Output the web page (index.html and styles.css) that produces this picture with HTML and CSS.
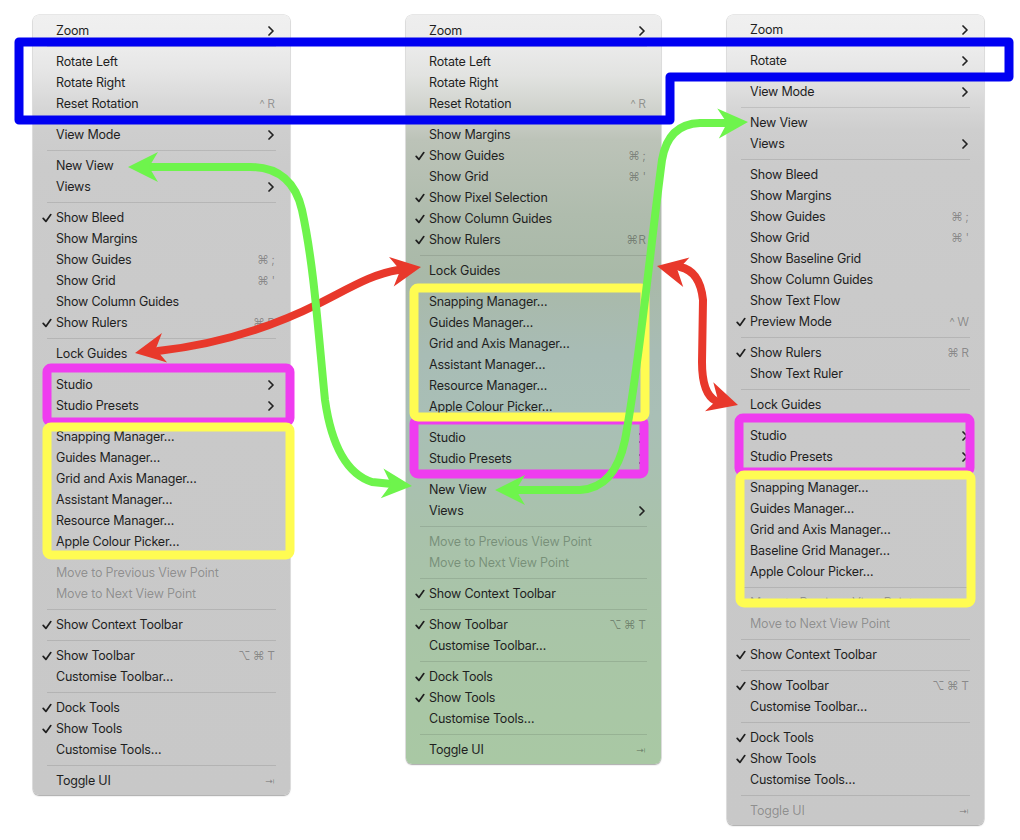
FILE: index.html
```html
<!DOCTYPE html>
<html>
<head>
<meta charset="utf-8">
<link rel="stylesheet" href="styles.css">
</head>
<body>
<div class="stage">
  <div class="menus">
    <div class="menu m1">
      <div class="item"><span class="chk"></span><span class="lbl">Zoom</span><svg class="cv" viewBox="0 0 6 10"><path d="M1 1L5 5L1 9"/></svg></div>
      <div class="sep"></div>
      <div class="item"><span class="chk"></span><span class="lbl">Rotate Left</span></div>
      <div class="item"><span class="chk"></span><span class="lbl">Rotate Right</span></div>
      <div class="item"><span class="chk"></span><span class="lbl">Reset Rotation</span><span class="key">^ R</span></div>
      <div class="sep"></div>
      <div class="item"><span class="chk"></span><span class="lbl">View Mode</span><svg class="cv" viewBox="0 0 6 10"><path d="M1 1L5 5L1 9"/></svg></div>
      <div class="sep"></div>
      <div class="item"><span class="chk"></span><span class="lbl">New View</span></div>
      <div class="item"><span class="chk"></span><span class="lbl">Views</span><svg class="cv" viewBox="0 0 6 10"><path d="M1 1L5 5L1 9"/></svg></div>
      <div class="sep"></div>
      <div class="item"><span class="chk"><svg class="ck" viewBox="0 0 10 10"><path d="M1.2 5.4L3.9 8.4L8.8 1.6"/></svg></span><span class="lbl">Show Bleed</span></div>
      <div class="item"><span class="chk"></span><span class="lbl">Show Margins</span></div>
      <div class="item"><span class="chk"></span><span class="lbl">Show Guides</span><span class="key">⌘ ;</span></div>
      <div class="item"><span class="chk"></span><span class="lbl">Show Grid</span><span class="key">⌘ '</span></div>
      <div class="item"><span class="chk"></span><span class="lbl">Show Column Guides</span></div>
      <div class="item"><span class="chk"><svg class="ck" viewBox="0 0 10 10"><path d="M1.2 5.4L3.9 8.4L8.8 1.6"/></svg></span><span class="lbl">Show Rulers</span><span class="key">⌘ R</span></div>
      <div class="sep"></div>
      <div class="item"><span class="chk"></span><span class="lbl">Lock Guides</span></div>
      <div class="sep"></div>
      <div class="item"><span class="chk"></span><span class="lbl">Studio</span><svg class="cv" viewBox="0 0 6 10"><path d="M1 1L5 5L1 9"/></svg></div>
      <div class="item"><span class="chk"></span><span class="lbl">Studio Presets</span><svg class="cv" viewBox="0 0 6 10"><path d="M1 1L5 5L1 9"/></svg></div>
      <div class="sep"></div>
      <div class="item"><span class="chk"></span><span class="lbl">Snapping Manager…</span></div>
      <div class="item"><span class="chk"></span><span class="lbl">Guides Manager…</span></div>
      <div class="item"><span class="chk"></span><span class="lbl">Grid and Axis Manager…</span></div>
      <div class="item"><span class="chk"></span><span class="lbl">Assistant Manager…</span></div>
      <div class="item"><span class="chk"></span><span class="lbl">Resource Manager…</span></div>
      <div class="item"><span class="chk"></span><span class="lbl">Apple Colour Picker…</span></div>
      <div class="sep"></div>
      <div class="item dis"><span class="chk"></span><span class="lbl">Move to Previous View Point</span></div>
      <div class="item dis"><span class="chk"></span><span class="lbl">Move to Next View Point</span></div>
      <div class="sep"></div>
      <div class="item"><span class="chk"><svg class="ck" viewBox="0 0 10 10"><path d="M1.2 5.4L3.9 8.4L8.8 1.6"/></svg></span><span class="lbl">Show Context Toolbar</span></div>
      <div class="sep"></div>
      <div class="item"><span class="chk"><svg class="ck" viewBox="0 0 10 10"><path d="M1.2 5.4L3.9 8.4L8.8 1.6"/></svg></span><span class="lbl">Show Toolbar</span><span class="key">⌥ ⌘ T</span></div>
      <div class="item"><span class="chk"></span><span class="lbl">Customise Toolbar…</span></div>
      <div class="sep"></div>
      <div class="item"><span class="chk"><svg class="ck" viewBox="0 0 10 10"><path d="M1.2 5.4L3.9 8.4L8.8 1.6"/></svg></span><span class="lbl">Dock Tools</span></div>
      <div class="item"><span class="chk"><svg class="ck" viewBox="0 0 10 10"><path d="M1.2 5.4L3.9 8.4L8.8 1.6"/></svg></span><span class="lbl">Show Tools</span></div>
      <div class="item"><span class="chk"></span><span class="lbl">Customise Tools…</span></div>
      <div class="sep"></div>
      <div class="item"><span class="chk"></span><span class="lbl">Toggle UI</span><span class="key tab">⇥</span></div>
    </div>

    <div class="menu m2">
      <div class="item"><span class="chk"></span><span class="lbl">Zoom</span><svg class="cv" viewBox="0 0 6 10"><path d="M1 1L5 5L1 9"/></svg></div>
      <div class="sep"></div>
      <div class="item"><span class="chk"></span><span class="lbl">Rotate Left</span></div>
      <div class="item"><span class="chk"></span><span class="lbl">Rotate Right</span></div>
      <div class="item"><span class="chk"></span><span class="lbl">Reset Rotation</span><span class="key">^ R</span></div>
      <div class="sep"></div>
      <div class="item"><span class="chk"></span><span class="lbl">Show Margins</span></div>
      <div class="item"><span class="chk"><svg class="ck" viewBox="0 0 10 10"><path d="M1.2 5.4L3.9 8.4L8.8 1.6"/></svg></span><span class="lbl">Show Guides</span><span class="key">⌘ ;</span></div>
      <div class="item"><span class="chk"></span><span class="lbl">Show Grid</span><span class="key">⌘ '</span></div>
      <div class="item"><span class="chk"><svg class="ck" viewBox="0 0 10 10"><path d="M1.2 5.4L3.9 8.4L8.8 1.6"/></svg></span><span class="lbl">Show Pixel Selection</span></div>
      <div class="item"><span class="chk"><svg class="ck" viewBox="0 0 10 10"><path d="M1.2 5.4L3.9 8.4L8.8 1.6"/></svg></span><span class="lbl">Show Column Guides</span></div>
      <div class="item"><span class="chk"><svg class="ck" viewBox="0 0 10 10"><path d="M1.2 5.4L3.9 8.4L8.8 1.6"/></svg></span><span class="lbl">Show Rulers</span><span class="key">⌘R</span></div>
      <div class="sep"></div>
      <div class="item"><span class="chk"></span><span class="lbl">Lock Guides</span></div>
      <div class="sep"></div>
      <div class="item"><span class="chk"></span><span class="lbl">Snapping Manager…</span></div>
      <div class="item"><span class="chk"></span><span class="lbl">Guides Manager…</span></div>
      <div class="item"><span class="chk"></span><span class="lbl">Grid and Axis Manager…</span></div>
      <div class="item"><span class="chk"></span><span class="lbl">Assistant Manager…</span></div>
      <div class="item"><span class="chk"></span><span class="lbl">Resource Manager…</span></div>
      <div class="item"><span class="chk"></span><span class="lbl">Apple Colour Picker…</span></div>
      <div class="sep"></div>
      <div class="item"><span class="chk"></span><span class="lbl">Studio</span><svg class="cv" viewBox="0 0 6 10"><path d="M1 1L5 5L1 9"/></svg></div>
      <div class="item"><span class="chk"></span><span class="lbl">Studio Presets</span><svg class="cv" viewBox="0 0 6 10"><path d="M1 1L5 5L1 9"/></svg></div>
      <div class="sep"></div>
      <div class="item"><span class="chk"></span><span class="lbl">New View</span></div>
      <div class="item"><span class="chk"></span><span class="lbl">Views</span><svg class="cv" viewBox="0 0 6 10"><path d="M1 1L5 5L1 9"/></svg></div>
      <div class="sep"></div>
      <div class="item dis"><span class="chk"></span><span class="lbl">Move to Previous View Point</span></div>
      <div class="item dis"><span class="chk"></span><span class="lbl">Move to Next View Point</span></div>
      <div class="sep"></div>
      <div class="item"><span class="chk"><svg class="ck" viewBox="0 0 10 10"><path d="M1.2 5.4L3.9 8.4L8.8 1.6"/></svg></span><span class="lbl">Show Context Toolbar</span></div>
      <div class="sep"></div>
      <div class="item"><span class="chk"><svg class="ck" viewBox="0 0 10 10"><path d="M1.2 5.4L3.9 8.4L8.8 1.6"/></svg></span><span class="lbl">Show Toolbar</span><span class="key">⌥ ⌘ T</span></div>
      <div class="item"><span class="chk"></span><span class="lbl">Customise Toolbar…</span></div>
      <div class="sep"></div>
      <div class="item"><span class="chk"><svg class="ck" viewBox="0 0 10 10"><path d="M1.2 5.4L3.9 8.4L8.8 1.6"/></svg></span><span class="lbl">Dock Tools</span></div>
      <div class="item"><span class="chk"><svg class="ck" viewBox="0 0 10 10"><path d="M1.2 5.4L3.9 8.4L8.8 1.6"/></svg></span><span class="lbl">Show Tools</span></div>
      <div class="item"><span class="chk"></span><span class="lbl">Customise Tools…</span></div>
      <div class="sep"></div>
      <div class="item"><span class="chk"></span><span class="lbl">Toggle UI</span><span class="key tab">⇥</span></div>
    </div>

    <div class="menu m3">
      <div class="item"><span class="chk"></span><span class="lbl">Zoom</span><svg class="cv" viewBox="0 0 6 10"><path d="M1 1L5 5L1 9"/></svg></div>
      <div class="sep"></div>
      <div class="item"><span class="chk"></span><span class="lbl">Rotate</span><svg class="cv" viewBox="0 0 6 10"><path d="M1 1L5 5L1 9"/></svg></div>
      <div class="sep"></div>
      <div class="item"><span class="chk"></span><span class="lbl">View Mode</span><svg class="cv" viewBox="0 0 6 10"><path d="M1 1L5 5L1 9"/></svg></div>
      <div class="sep"></div>
      <div class="item"><span class="chk"></span><span class="lbl">New View</span></div>
      <div class="item"><span class="chk"></span><span class="lbl">Views</span><svg class="cv" viewBox="0 0 6 10"><path d="M1 1L5 5L1 9"/></svg></div>
      <div class="sep"></div>
      <div class="item"><span class="chk"></span><span class="lbl">Show Bleed</span></div>
      <div class="item"><span class="chk"></span><span class="lbl">Show Margins</span></div>
      <div class="item"><span class="chk"></span><span class="lbl">Show Guides</span><span class="key">⌘ ;</span></div>
      <div class="item"><span class="chk"></span><span class="lbl">Show Grid</span><span class="key">⌘ '</span></div>
      <div class="item"><span class="chk"></span><span class="lbl">Show Baseline Grid</span></div>
      <div class="item"><span class="chk"></span><span class="lbl">Show Column Guides</span></div>
      <div class="item"><span class="chk"></span><span class="lbl">Show Text Flow</span></div>
      <div class="item"><span class="chk"><svg class="ck" viewBox="0 0 10 10"><path d="M1.2 5.4L3.9 8.4L8.8 1.6"/></svg></span><span class="lbl">Preview Mode</span><span class="key">^ W</span></div>
      <div class="sep"></div>
      <div class="item"><span class="chk"><svg class="ck" viewBox="0 0 10 10"><path d="M1.2 5.4L3.9 8.4L8.8 1.6"/></svg></span><span class="lbl">Show Rulers</span><span class="key">⌘ R</span></div>
      <div class="item"><span class="chk"></span><span class="lbl">Show Text Ruler</span></div>
      <div class="sep"></div>
      <div class="item"><span class="chk"></span><span class="lbl">Lock Guides</span></div>
      <div class="sep"></div>
      <div class="item"><span class="chk"></span><span class="lbl">Studio</span><svg class="cv" viewBox="0 0 6 10"><path d="M1 1L5 5L1 9"/></svg></div>
      <div class="item"><span class="chk"></span><span class="lbl">Studio Presets</span><svg class="cv" viewBox="0 0 6 10"><path d="M1 1L5 5L1 9"/></svg></div>
      <div class="sep"></div>
      <div class="item"><span class="chk"></span><span class="lbl">Snapping Manager…</span></div>
      <div class="item"><span class="chk"></span><span class="lbl">Guides Manager…</span></div>
      <div class="item"><span class="chk"></span><span class="lbl">Grid and Axis Manager…</span></div>
      <div class="item"><span class="chk"></span><span class="lbl">Baseline Grid Manager…</span></div>
      <div class="item"><span class="chk"></span><span class="lbl">Apple Colour Picker…</span></div>
      <div class="sep"></div>
      <div class="item dis"><span class="chk"></span><span class="lbl">Move to Previous View Point</span></div>
      <div class="item dis"><span class="chk"></span><span class="lbl">Move to Next View Point</span></div>
      <div class="sep"></div>
      <div class="item"><span class="chk"><svg class="ck" viewBox="0 0 10 10"><path d="M1.2 5.4L3.9 8.4L8.8 1.6"/></svg></span><span class="lbl">Show Context Toolbar</span></div>
      <div class="sep"></div>
      <div class="item"><span class="chk"><svg class="ck" viewBox="0 0 10 10"><path d="M1.2 5.4L3.9 8.4L8.8 1.6"/></svg></span><span class="lbl">Show Toolbar</span><span class="key">⌥ ⌘ T</span></div>
      <div class="item"><span class="chk"></span><span class="lbl">Customise Toolbar…</span></div>
      <div class="sep"></div>
      <div class="item"><span class="chk"><svg class="ck" viewBox="0 0 10 10"><path d="M1.2 5.4L3.9 8.4L8.8 1.6"/></svg></span><span class="lbl">Dock Tools</span></div>
      <div class="item"><span class="chk"><svg class="ck" viewBox="0 0 10 10"><path d="M1.2 5.4L3.9 8.4L8.8 1.6"/></svg></span><span class="lbl">Show Tools</span></div>
      <div class="item"><span class="chk"></span><span class="lbl">Customise Tools…</span></div>
      <div class="sep"></div>
      <div class="item dis"><span class="chk"></span><span class="lbl">Toggle UI</span><span class="key tab">⇥</span></div>
    </div>
  </div>

  <svg class="ann" viewBox="0 0 1020 840" width="1020" height="840">
    <g class="mg">
      <rect x="47" y="368" width="243" height="54" rx="4"/>
      <rect x="414" y="420" width="230" height="54" rx="4"/>
      <rect x="739" y="418" width="231" height="54" rx="4"/>
    </g>
    <g class="yl">
      <rect x="47" y="427" width="243" height="128" rx="4"/>
      <rect x="414" y="288" width="231" height="129" rx="4"/>
      <rect x="740" y="475" width="231" height="128" rx="4"/>
    </g>
    <path class="bl" d="M19 42H1009V77H670V120H19Z"/>
    <g class="rd">
      <path d="M158 351C220 344 270 328 318 304C350 288 372 274 398 270"/>
      <path d="M680 267Q700 271 703 300L702 362Q702 394 716 401"/>
      <polygon transform="translate(135 353) rotate(170)" points="0,0 -30,-15 -21,0 -30,15"/>
      <polygon transform="translate(421 267) rotate(-9)" points="0,0 -30,-15 -21,0 -30,15"/>
      <polygon transform="translate(657 266) rotate(192)" points="0,0 -30,-15 -21,0 -30,15"/>
      <polygon transform="translate(738 405) rotate(16)" points="0,0 -30,-15 -21,0 -30,15"/>
    </g>
    <g class="gr">
      <path d="M150 167H250Q292 167 302 210C314 265 318 330 325 400Q335 470 372 482L392 484"/>
      <path d="M518 490H580Q615 488 625 440C640 360 650 250 662 160Q668 124 700 123H727"/>
      <polygon transform="translate(128 167) rotate(180)" points="0,0 -30,-15 -21,0 -30,15"/>
      <polygon transform="translate(412 486) rotate(5)" points="0,0 -30,-15 -21,0 -30,15"/>
      <polygon transform="translate(495 490) rotate(180)" points="0,0 -30,-15 -21,0 -30,15"/>
      <polygon transform="translate(748 122) rotate(-3)" points="0,0 -30,-15 -21,0 -30,15"/>
    </g>
  </svg>
</div>
</body>
</html>
```
FILE: styles.css
```css
body {
  margin: 0;
  background: #ffffff;
  font-family: "Inter", "DejaVu Sans", sans-serif;
  font-size: 12.5px;
  letter-spacing: -0.2px;
}

.stage {
  position: relative;
  width: 1020px;
  height: 840px;
  overflow: hidden;
}

.menus {
  display: flex;
  align-items: flex-start;
  padding-top: 15px;
}

.menu {
  box-sizing: border-box;
  padding: 5px 0 4px;
  border-radius: 6px;
  box-shadow: 0 0 0 0.5px rgba(0, 0, 0, 0.18), 0 1px 1.5px rgba(0, 0, 0, 0.28);
}

.m1, .m3 {
  width: 257px;
  background: linear-gradient(to bottom, #f0f0f0 0px, #eeeeee 25px, #e6e6e6 55px, #d9d9d9 85px, #cecece 115px, #cbcbcb 150px, #c9c9c9 400px, #c8c8c8 100%);
}

.m1 { margin-left: 33px; }

.m2 {
  width: 255px;
  margin-left: 116px;
  background: linear-gradient(to bottom, #eeeeee 0px, #ebebeb 30px, #e2e3e1 60px, #cfd2cc 95px, #bcc3b8 125px, #afbcad 200px, #a9b9a8 260px, #a8bcb5 340px, #a9bfb6 400px, #a9c2ab 520px, #a9c6a6 650px, #a9c8a4 100%);
}

.m3 {
  margin-left: 66px;
  padding-top: 4px;
}

.item {
  display: flex;
  align-items: center;
  height: 21px;
  padding: 0 15px 0 9px;
  color: #1f1f1f;
  white-space: nowrap;
}

.item.dis { color: rgba(0, 0, 0, 0.3); }

.m2 .item.dis { color: rgba(40, 60, 40, 0.38); }

.chk {
  width: 14px;
  flex: none;
  display: flex;
  align-items: center;
}

.ck {
  width: 10px;
  height: 10px;
  fill: none;
  stroke: #1f1f1f;
  stroke-width: 1.7;
  stroke-linecap: round;
  stroke-linejoin: round;
}

.lbl { flex: 1; }

.cv {
  width: 6px;
  height: 10px;
  fill: none;
  stroke: #222222;
  stroke-width: 1.7;
  stroke-linecap: round;
  stroke-linejoin: round;
  margin-right: 1px;
}

.key {
  color: rgba(0, 0, 0, 0.32);
  font-size: 12px;
  word-spacing: -1px;
  letter-spacing: 0;
}

.key.tab { font-size: 10px; }

.sep {
  height: 10px;
  margin: 0 14px;
  display: flex;
  align-items: center;
}

.sep::after {
  content: "";
  flex: 1;
  height: 1px;
  background: rgba(0, 0, 0, 0.1);
}

.ann {
  position: absolute;
  left: 0;
  top: 0;
  pointer-events: none;
}

.mg rect { fill: none; stroke: #ef3cef; stroke-width: 9; }
.yl rect { fill: none; stroke: #fffc52; stroke-width: 9; }

.bl { fill: none; stroke: #0000f2; stroke-width: 9; stroke-linejoin: round; }

.rd path { fill: none; stroke: #e8382b; stroke-width: 8; stroke-linecap: round; }
.rd polygon { fill: #e8382b; }

.gr path { fill: none; stroke: #6ef44c; stroke-width: 8; stroke-linecap: round; stroke-linejoin: round; }
.gr polygon { fill: #6ef44c; }
```
